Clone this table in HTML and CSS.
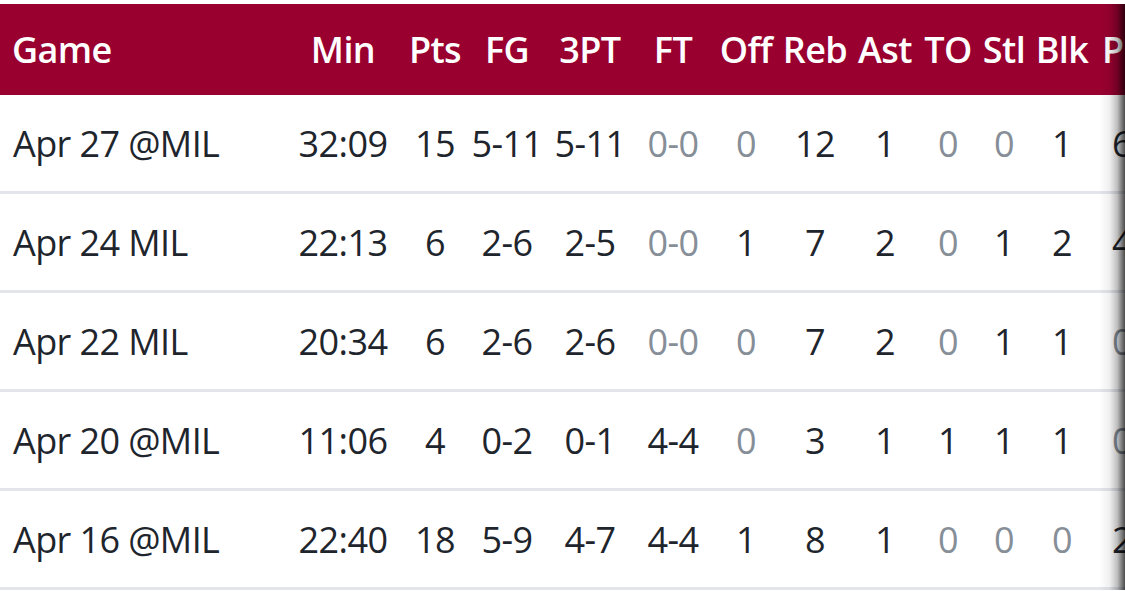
FILE: index.html
```html
<!DOCTYPE html>
<html lang="en">
<head>
<meta charset="utf-8">
<title>Game Log</title>
<link rel="stylesheet" href="styles.css">
</head>
<body>
<div class="scroller">
  <table class="log">
    <colgroup>
      <col class="c-game"><col class="c-min"><col class="c-pts"><col class="c-fg"><col class="c-3pt"><col class="c-ft"><col class="c-off"><col class="c-reb"><col class="c-ast"><col class="c-to"><col class="c-stl"><col class="c-blk"><col class="c-pf">
    </colgroup>
    <thead>
      <tr>
        <th class="game">Game</th><th>Min</th><th>Pts</th><th>FG</th><th>3PT</th><th>FT</th><th>Off</th><th>Reb</th><th>Ast</th><th>TO</th><th>Stl</th><th>Blk</th><th>PF</th>
      </tr>
    </thead>
    <tbody>
      <tr>
        <td class="game">Apr 27 @MIL</td><td>32:09</td><td>15</td><td>5-11</td><td>5-11</td><td class="zero">0-0</td><td class="zero">0</td><td>12</td><td>1</td><td class="zero">0</td><td class="zero">0</td><td>1</td><td>6</td>
      </tr>
      <tr>
        <td class="game">Apr 24 MIL</td><td>22:13</td><td>6</td><td>2-6</td><td>2-5</td><td class="zero">0-0</td><td>1</td><td>7</td><td>2</td><td class="zero">0</td><td>1</td><td>2</td><td>4</td>
      </tr>
      <tr>
        <td class="game">Apr 22 MIL</td><td>20:34</td><td>6</td><td>2-6</td><td>2-6</td><td class="zero">0-0</td><td class="zero">0</td><td>7</td><td>2</td><td class="zero">0</td><td>1</td><td>1</td><td class="zero">0</td>
      </tr>
      <tr>
        <td class="game">Apr 20 @MIL</td><td>11:06</td><td>4</td><td>0-2</td><td>0-1</td><td>4-4</td><td class="zero">0</td><td>3</td><td>1</td><td>1</td><td>1</td><td>1</td><td class="zero">0</td>
      </tr>
      <tr>
        <td class="game">Apr 16 @MIL</td><td>22:40</td><td>18</td><td>5-9</td><td>4-7</td><td>4-4</td><td>1</td><td>8</td><td>1</td><td class="zero">0</td><td class="zero">0</td><td class="zero">0</td><td>2</td>
      </tr>
    </tbody>
  </table>
  <div class="edge-shadow"></div>
</div>
</body>
</html>
```

FILE: styles.css
```css
html, body {
  margin: 0;
  padding: 0;
  background: #ffffff;
}

body {
  padding-top: 4px;
  font-family: "Open Sans", "Noto Sans", "DejaVu Sans", sans-serif;
  color: #1e252c;
  overflow: hidden;
}

.scroller {
  position: relative;
  width: 1125px;
  overflow: hidden;
}

.log {
  border-collapse: collapse;
  table-layout: fixed;
  width: 1152px;
  font-size: 36px;
}

.c-game { width: 284px; }
.c-min { width: 118px; }
.c-pts { width: 66px; }
.c-fg { width: 78px; }
.c-3pt { width: 88px; }
.c-ft { width: 78px; }
.c-off { width: 68px; }
.c-reb { width: 70px; }
.c-ast { width: 70px; }
.c-to { width: 56px; }
.c-stl { width: 56px; }
.c-blk { width: 60px; }
.c-pf { width: 60px; }

.log th {
  background: #990030;
  color: #ffffff;
  font-weight: 600;
  height: 91px;
  padding: 0;
  text-align: center;
  vertical-align: middle;
  white-space: nowrap;
  letter-spacing: -0.6px;
}

.log td {
  height: 96px;
  padding: 0;
  text-align: center;
  vertical-align: middle;
  white-space: nowrap;
  letter-spacing: -0.6px;
  border-bottom: 3px solid #e3e5eb;
}

.log th.game {
  text-align: left;
  padding-left: 12px;
}

.log td.game {
  text-align: left;
  padding-left: 13px;
}

.log td.zero {
  color: #868e98;
}

.edge-shadow {
  position: absolute;
  top: 0;
  right: 0;
  bottom: 0;
  width: 26px;
  background: linear-gradient(to right, rgba(0,0,0,0) 0%, rgba(0,0,0,0.06) 40%, rgba(0,0,0,0.25) 70%, rgba(0,0,0,0.7) 100%);
  pointer-events: none;
}
```
